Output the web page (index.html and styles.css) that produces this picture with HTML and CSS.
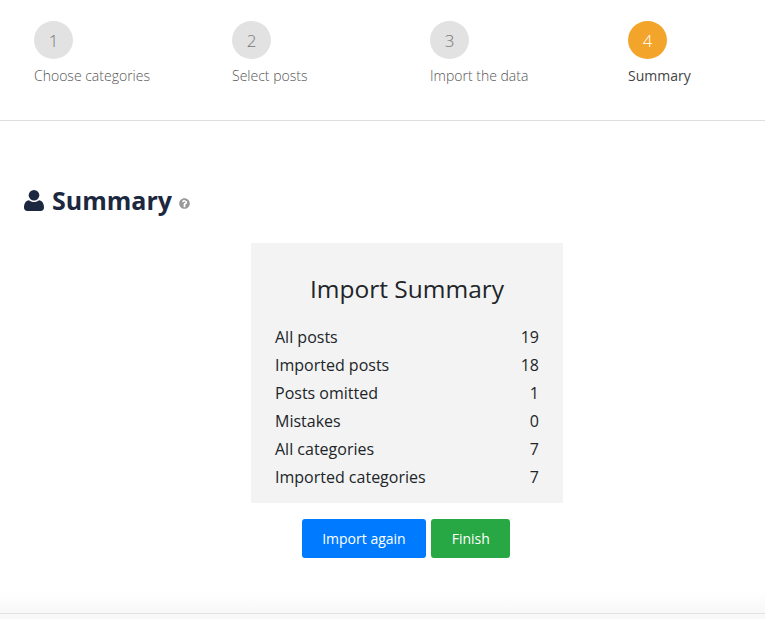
FILE: index.html
```html
<!DOCTYPE html>
<html lang="en">
<head>
<meta charset="utf-8">
<title>Import Summary</title>
<link rel="stylesheet" href="styles.css">
</head>
<body>
<ol class="steps">
  <li class="step"><span class="step-num">1</span><span class="step-label">Choose categories</span></li>
  <li class="step"><span class="step-num">2</span><span class="step-label">Select posts</span></li>
  <li class="step"><span class="step-num">3</span><span class="step-label">Import the data</span></li>
  <li class="step step-active"><span class="step-num">4</span><span class="step-label">Summary</span></li>
</ol>
<main class="content">
  <h1 class="page-title">
    <svg class="icon-user" viewBox="0 0 20 21" aria-hidden="true"><circle cx="10" cy="5.300" r="5.300"/><path d="M5 10.200C6.300 11.400 8 12 10 12s3.700-.6 5-1.800c3.200.2 5 3.300 5 7.300 0 2.200-1.400 3.500-3.300 3.500H3.300C1.400 21 0 19.700 0 17.500c0-4 1.800-7.100 5-7.300z"/></svg>
    <span>Summary</span>
    <svg class="icon-help" viewBox="0 0 512 512" aria-hidden="true"><path d="M504 256c0 137-111 248-248 248S8 393 8 256 119 8 256 8s248 111 248 248zM262.700 90c-54.500 0-89.300 23-116.500 63.800-3.500 5.300-2.400 12.400 2.700 16.300l34.700 26.300c5.200 3.900 12.600 3 16.700-2.100 17.900-22.700 30.100-35.800 57.300-35.800 20.400 0 45.700 13.100 45.700 33 0 15-12.400 22.700-32.600 34-23.600 13.200-54.800 29.700-54.800 70.900V320c0 6.600 5.400 12 12 12h56c6.600 0 12-5.400 12-12v-1.300c0-28.600 83.500-29.800 83.500-107.100 0-58.200-60.400-102.600-116.700-102.600zM256 338c-25.500 0-46.200 20.700-46.200 46.200 0 25.500 20.700 46.200 46.200 46.200s46.200-20.700 46.200-46.200c0-25.500-20.700-46.200-46.200-46.200z"/></svg>
  </h1>
  <section class="card">
    <h2 class="card-title">Import Summary</h2>
    <dl class="stats">
      <div class="stat"><dt>All posts</dt><dd>19</dd></div>
      <div class="stat"><dt>Imported posts</dt><dd>18</dd></div>
      <div class="stat"><dt>Posts omitted</dt><dd>1</dd></div>
      <div class="stat"><dt>Mistakes</dt><dd>0</dd></div>
      <div class="stat"><dt>All categories</dt><dd>7</dd></div>
      <div class="stat"><dt>Imported categories</dt><dd>7</dd></div>
    </dl>
  </section>
  <div class="actions">
    <a class="btn btn-blue" href="#">Import again</a>
    <a class="btn btn-green" href="#">Finish</a>
  </div>
</main>
<footer class="footer"></footer>
</body>
</html>
```
FILE: styles.css
```css
* { box-sizing: border-box; }
html, body { margin: 0; padding: 0; }
body {
  height: 619px;
  overflow: hidden;
  background: #fff;
  font-family: "Open Sans", sans-serif;
  color: #212529;
  display: flex;
  flex-direction: column;
}
.steps {
  list-style: none;
  margin: 0;
  padding: 21px 0 0 34px;
  height: 121px;
  flex: none;
  display: grid;
  grid-template-columns: repeat(3, 198px) 1fr;
  border-bottom: 1px solid #dedede;
}
.step { display: flex; flex-direction: column; align-items: flex-start; }
.step-num {
  width: 39px;
  height: 38px;
  border-radius: 50%;
  background: #e2e2e2;
  color: #777;
  font-size: 17px;
  font-weight: 300;
  display: flex;
  align-items: center;
  justify-content: center;
}
.step-label {
  margin-top: 7px;
  font-size: 14px;
  line-height: 20px;
  font-weight: 300;
  color: #555;
}
.step-active .step-num { background: #f3a42a; color: #fff; }
.step-active .step-label { font-weight: 400; color: #444; }
.content {
  flex: 1;
  padding: 0 0 0 49px;
  display: flex;
  flex-direction: column;
  background: linear-gradient(to bottom, #fff calc(100% - 22px), #f8f8f8);
}
.page-title {
  margin: 58px 0 23px -25px;
  height: 41px;
  display: flex;
  align-items: center;
  font-size: 25px;
  font-weight: 700;
  color: #1c2840;
}
.icon-user { width: 20px; height: 21px; fill: #1c2840; margin: 2px 8px 0 0; }
.icon-help { width: 11px; height: 11px; fill: #999; margin: 8px 0 0 7px; }
.card {
  width: 312px;
  height: 260px;
  align-self: center;
  background: #f3f3f3;
  padding: 28px 24px 24px;
}
.card-title {
  margin: 0 0 16px;
  font-size: 24.5px;
  line-height: 36px;
  font-weight: 400;
  text-align: center;
  color: #212529;
}
.stats { margin: 0; }
.stat {
  display: flex;
  justify-content: space-between;
  font-size: 16px;
  line-height: 28px;
}
.stat dt { font-weight: 400; }
.stat dd { margin: 0; }
.actions {
  margin: 16px 2px 0 0;
  display: flex;
  justify-content: center;
  gap: 5px;
}
.btn {
  height: 39px;
  padding: 0 20.5px;
  border-radius: 3px;
  color: #fff;
  font-size: 14px;
  font-weight: 500;
  line-height: 39px;
  text-decoration: none;
}
.btn-blue { background: #007bff; }
.btn-green { background: #28a745; }
.footer {
  flex: none;
  height: 6px;
  background: #f8f8f8;
  border-top: 1px solid #e2e2e2;
}
```
